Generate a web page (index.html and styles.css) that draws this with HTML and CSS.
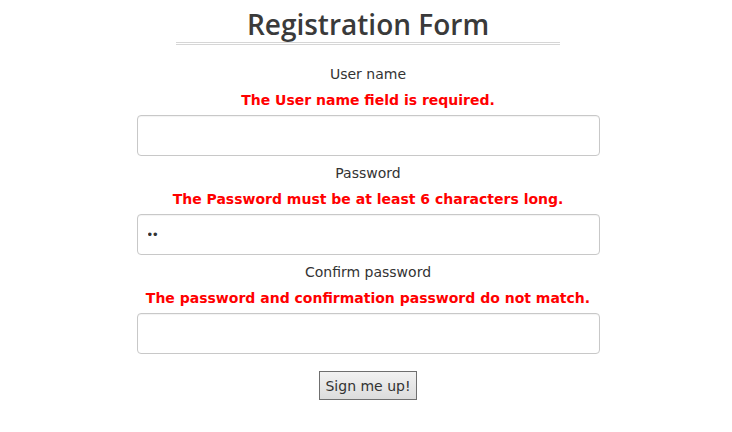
FILE: index.html
```html
<!DOCTYPE html>
<html>
<head>
<meta charset="utf-8">
<link rel="stylesheet" href="styles.css">
</head>
<body>
<div class="page">
  <h1 class="title">Registration Form</h1>
  <form class="form">
    <div class="field">
      <label class="label">User name</label>
      <div class="error">The User name field is required.</div>
      <input class="input" type="text">
    </div>
    <div class="field">
      <label class="label">Password</label>
      <div class="error">The Password must be at least 6 characters long.</div>
      <input class="input" type="password" value="ab">
    </div>
    <div class="field">
      <label class="label">Confirm password</label>
      <div class="error">The password and confirmation password do not match.</div>
      <input class="input" type="password">
    </div>
    <div class="actions">
      <button class="btn" type="button">Sign me up!</button>
    </div>
  </form>
</div>
</body>
</html>
```

FILE: styles.css
```css
* { box-sizing: border-box; }
html, body { margin: 0; padding: 0; background: #fff; }
body { font-family: "Comic Sans MS", "DejaVu Sans", sans-serif; color: #333; }
.page { width: 732px; padding: 0 0 0 4px; display: flex; flex-direction: column; align-items: center; }
.title {
  margin: 7px 0 0;
  width: 384px;
  text-align: center;
  font-family: "Open Sans", sans-serif;
  font-weight: 600;
  font-size: 28px;
  line-height: 34px;
  color: #3a3a3a;
  padding-bottom: 1px;
  border-bottom: 3px double #d6d6d6;
}
.form { width: 463px; display: flex; flex-direction: column; margin-top: 19px; }
.field { display: flex; flex-direction: column; align-items: center; margin-bottom: 7px; }
.label { font-size: 14px; line-height: 20px; color: #333; }
.error { margin-top: 6px; font-size: 14px; line-height: 20px; font-weight: bold; color: #ff0000; }
.input {
  margin-top: 5px;
  width: 463px; height: 41px;
  border: 1px solid #c8c8c8; border-radius: 4px;
  padding: 0 10px; font-size: 13px; letter-spacing: 1px; color: #333;
  box-shadow: inset 0 1px 1px rgba(0,0,0,0.05);
}
.actions { display: flex; justify-content: center; margin-top: 10px; }
.btn {
  font-family: "Comic Sans MS", "DejaVu Sans", sans-serif;
  font-size: 14px; color: #333;
  width: 98px; height: 29px;
  border: 1px solid #6f6f6f;
  background: linear-gradient(#f2f2f2, #dcdcdc);
  padding: 0;
}
```
